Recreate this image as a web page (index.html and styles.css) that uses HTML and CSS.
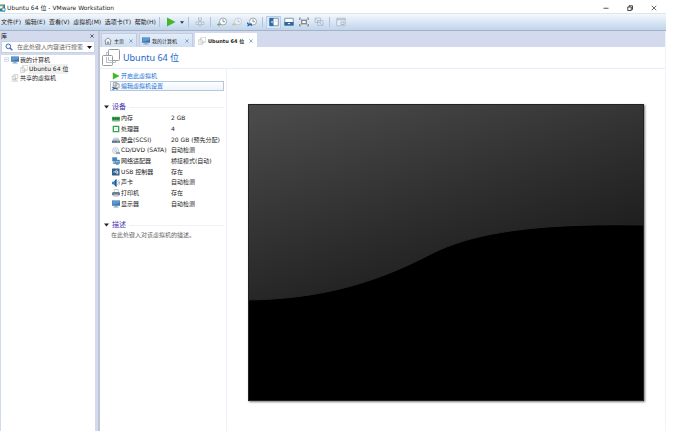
FILE: index.html
```html
<!DOCTYPE html>
<html lang="zh-CN">
<head>
<meta charset="utf-8">
<title>Ubuntu 64 位 - VMware Workstation</title>
<link rel="stylesheet" href="styles.css">
</head>
<body>
<svg class="defs" aria-hidden="true">
  <defs>
    <linearGradient id="grey" x1="0" y1="0" x2="0" y2="1"><stop offset="0" stop-color="#e3eaf0"/><stop offset="1" stop-color="#7d92a4"/></linearGradient>
    <symbol id="vm" viewBox="0 0 18 18"><g fill="#fff" stroke="#989898"><rect x="6.500" y=".5" width="11" height="11" rx="1"/><rect x=".5" y="6.500" width="10" height="10" rx="1"/><path d="M4.500 6.500v-3h2M4.500 8v5.500h9v-2M6.500 8v3.500h4" fill="none" stroke="#b4bfc2"/></g></symbol>
    <symbol id="monitor" viewBox="0 0 18 18"><path d="M0 1h18v12H0z" fill="#3a78b6"/><path d="M1 2h16v4L1 11z" fill="#5c98d2"/><path d="M6 13h6v2h3v2H3v-2h3z" fill="#8fa3b5"/></symbol>
    <symbol id="play" viewBox="0 0 10 10"><path d="M1 0.500L9.500 5L1 9.500z" fill="#44b432"/></symbol>
    <symbol id="clock" viewBox="0 0 20 20"><circle cx="12" cy="9" r="7" fill="#fbfdff" stroke="#8b949c" stroke-width="1.600"/><path d="M12 4.500V9.500H16" fill="none" stroke="#6e7880" stroke-width="1.500"/></symbol>
    <symbol id="cross" viewBox="0 0 10 10"><path d="M1 1l8 8M9 1L1 9" fill="none" stroke="currentColor" stroke-width="2"/></symbol>
    <symbol id="down" viewBox="0 0 10 6"><path d="M0 0h10L5 6z" fill="currentColor"/></symbol>
  </defs>
</svg>
<div class="window">
  <header class="titlebar">
    <svg class="logo" viewBox="0 0 12 16"><path d="M0 1h10v14H0z" fill="#1687b8"/><path d="M0 3h7v7H0z" fill="#f3b33c"/><path d="M0 5h5v3H0z" fill="#fff"/><path d="M4 8h6v6H4z" fill="#fff" stroke="#0c79a9" stroke-width="1.500"/></svg>
    <h1 class="caption">Ubuntu 64 位 - VMware Workstation</h1>
    <div class="controls">
      <button aria-label="最小化"><svg viewBox="0 0 12 12"><path d="M1 6.500h10" stroke="#444" stroke-width="1.800"/></svg></button>
      <button aria-label="还原"><svg viewBox="0 0 12 12"><path d="M4 4V1.500h7V9H9M1.500 4h7v7h-7z" fill="none" stroke="#333" stroke-width="1.800"/></svg></button>
      <button aria-label="关闭"><svg viewBox="0 0 12 12"><path d="M1.500 1.500l9 9M10.500 1.500l-9 9" stroke="#444" stroke-width="1.600"/></svg></button>
    </div>
  </header>

  <div class="menubar">
    <nav class="menus">
      <button>文件(F)</button><button>编辑(E)</button><button>查看(V)</button><button>虚拟机(M)</button><button>选项卡(T)</button><button>帮助(H)</button>
    </nav>
    <div class="tools">
      <span class="sep"></span>
      <button aria-label="开启"><svg class="icon"><use href="#play"/></svg></button>
      <button class="drop" aria-label="电源选项"><svg><use href="#down"/></svg></button>
      <span class="sep"></span>
      <button aria-label="发送按键"><svg class="icon" viewBox="0 0 20 20"><g fill="#e4ebf3" stroke="#abb8c6" stroke-width="1.500"><rect x="7" y="2" width="6" height="5"/><path d="M10 7v4M2 10h16v5H2zM7 10v5M13 10v5M8 15v3h4v-3"/></g></svg></button>
      <span class="sep"></span>
      <button aria-label="拍摄快照"><svg class="icon" viewBox="0 0 20 20"><use href="#clock"/><path d="M0 15h8M4 11v8" stroke="#6ea77b" stroke-width="2"/></svg></button>
      <button aria-label="恢复快照"><svg class="icon" viewBox="0 0 20 20"><g opacity=".4"><use href="#clock"/></g><path d="M9 15H1M4 12l-3 3 3 3" fill="none" stroke="#e3b78a" stroke-width="2"/></svg></button>
      <button aria-label="管理快照"><svg class="icon" viewBox="0 0 20 20"><use href="#clock"/><path d="M1 11c0 4 3 3 5 3h4M1 18l5-3 4 2" fill="none" stroke="#2765a4" stroke-width="2.500"/></svg></button>
      <span class="sep"></span>
      <button class="on" aria-label="显示库"><svg class="icon" viewBox="0 0 20 20"><path d="M1.500 2.500h17v15h-17z" fill="#fff" stroke="#6a7f95" stroke-width="1.600"/><path d="M1 2h8v16H1z" fill="#2e69a8"/><path d="M7 7l-3 3 3 3z" fill="#fff"/><path d="M12 6h4M12 9h4" stroke="#c3ccd5"/></svg></button>
      <button aria-label="显示缩略图"><svg class="icon" viewBox="0 0 20 20"><path d="M1.500 2.500h17v14h-17z" fill="#fff" stroke="#6a7f95" stroke-width="1.600"/><path d="M1 10h18v7H1z" fill="#2c67a5"/><path d="M7 12h6l-3 3z" fill="#fff"/></svg></button>
      <button aria-label="全屏"><svg class="icon" viewBox="0 0 20 20"><path d="M5.500 6.500h9v7h-9z" fill="#fff" stroke="#555" stroke-width="1.800"/><path d="M1 6V2h3M16 2h3v4M19 14v4h-3M4 18H1v-4M2 3l3 3M18 3l-3 3M2 17l3-3M18 17l-3-3" fill="none" stroke="#777" stroke-width="1.400"/></svg></button>
      <button aria-label="Unity"><svg class="icon" viewBox="0 0 20 20"><path d="M2 2h11v9H2zM7 7h11v10H7zM2 2l15 15" fill="none" stroke="#b0bac6" stroke-width="1.600"/></svg></button>
      <span class="sep"></span>
      <button aria-label="控制台视图"><svg class="icon" viewBox="0 0 20 20"><path d="M1.500 2.500h17v15h-17z" fill="#e7eef6" stroke="#acb9c8" stroke-width="1.800"/><path d="M2 5.500h16M10 10h6v5h-6z" fill="none" stroke="#acb9c8" stroke-width="2"/></svg></button>
    </div>
  </div>

  <div class="body">
    <aside class="library">
      <div class="library-head"><h2>库</h2><button aria-label="关闭库"><svg><use href="#cross"/></svg></button></div>
      <div class="search">
        <svg class="lens" viewBox="0 0 12 12"><circle cx="5" cy="5" r="3.500" fill="#eef5fd" stroke="#3c6fae" stroke-width="1.500"/><path d="M7.500 7.500L11 11" stroke="#3c6fae" stroke-width="2"/></svg>
        <input type="text" aria-label="搜索" placeholder="在此处键入内容进行搜索">
        <button aria-label="搜索选项"><svg><use href="#down"/></svg></button>
      </div>
      <ul class="tree">
        <li class="node"><svg class="toggle" viewBox="0 0 10 10"><path d="M1 1h8v8H1z" fill="#fff" stroke="#b9c2cc"/><path d="M3 5h4" stroke="#6c7c90"/></svg><svg class="tree-icon"><use href="#monitor"/></svg><span>我的计算机</span></li>
        <li class="node child"><svg class="tree-icon"><use href="#vm"/></svg><span class="picked">Ubuntu 64 位</span></li>
        <li class="node shared"><svg class="tree-icon" viewBox="0 0 18 18"><g fill="#fff" stroke="#9aa0a6"><path d="M6.500 1.500h9v9h-9zM2.500 4.500h8v8h-8z"/><path d="M6.500 12.500v3M1 16h15M11 11v5"/></g></svg><span>共享的虚拟机</span></li>
      </ul>
    </aside>

    <main class="main">
      <div class="tabs">
        <div class="tab home"><svg class="tab-icon" viewBox="0 0 18 18"><path d="M1 9l8-7 8 7M3.500 8v8.500h4V11h3v5.500h4V8" fill="#fff" stroke="#5d646b" stroke-width="1.500"/></svg><button class="name">主页</button><button class="close" aria-label="关闭主页"><svg><use href="#cross"/></svg></button></div>
        <div class="tab computer"><svg class="tab-icon"><use href="#monitor"/></svg><button class="name">我的计算机</button><button class="close" aria-label="关闭我的计算机"><svg><use href="#cross"/></svg></button></div>
        <div class="tab active"><svg class="tab-icon"><use href="#vm"/></svg><button class="name">Ubuntu 64 位</button><button class="close" aria-label="关闭 Ubuntu"><svg><use href="#cross"/></svg></button></div>
      </div>
      <div class="heading"><svg class="heading-icon"><use href="#vm"/></svg><h2>Ubuntu 64 位</h2></div>
      <div class="content">
        <section class="details">
          <div class="actions">
            <a href="#start"><svg class="row-icon"><use href="#play"/></svg>开启此虚拟机</a>
            <a class="focused" href="#settings"><svg class="row-icon" viewBox="0 0 18 18"><path d="M3 1h8v8H3zM7 4h9v9H7z" fill="#f4f6f8" stroke="#7d858d" stroke-width="1.500"/><path d="M1 11c2 3 4 1 6 3l6 2M1 17l6-3" fill="none" stroke="#35618e" stroke-width="2.500"/></svg>编辑虚拟机设置</a>
          </div>
          <h3 class="group"><svg><use href="#down"/></svg><span>设备</span></h3>
          <table class="devices">
            <tr><th scope="row"><svg class="row-icon" viewBox="0 0 18 18"><path d="M0 4h18v9H0z" fill="#3fa356"/><path d="M2 6h3v4H2zM7 6h3v4H7zM12 6h3v4h-3z" fill="#1d5c33"/><path d="M1 13h16v2H1z" fill="#a9c3a4"/></svg>内存</th><td>2 GB</td></tr>
            <tr><th scope="row"><svg class="row-icon" viewBox="0 0 18 18"><path d="M3 3h12v12H3z" fill="#fff" stroke="#33a355" stroke-width="3"/><path d="M7 7h4v4H7z" fill="#e2f0e4"/></svg>处理器</th><td>4</td></tr>
            <tr><th scope="row"><svg class="row-icon" viewBox="0 0 18 18"><path d="M4 3h10l4 8v4H0v-4z" fill="url(#grey)"/><path d="M0 11h18v4H0z" fill="#5f7487"/><path d="M12 13h3" stroke="#b4ddf2" stroke-width="1.500"/></svg>硬盘(SCSI)</th><td>20 GB (预先分配)</td></tr>
            <tr><th scope="row"><svg class="row-icon" viewBox="0 0 18 18"><circle cx="8" cy="8" r="7" fill="#e9eef2" stroke="#9aa8b4"/><circle cx="8" cy="8" r="2" fill="#fff" stroke="#899aa8"/><path d="M9 11h9v5H9z" fill="#8fa9c1"/></svg>CD/DVD (SATA)</th><td>自动检测</td></tr>
            <tr><th scope="row"><svg class="row-icon" viewBox="0 0 18 18"><path d="M1 1h10v8H1zM6 7h11v8H6z" fill="#3b86c9" stroke="#5f7d98"/><path d="M8 9h7v3H8z" fill="#8fcaf0"/><path d="M3 10v5h3M9 17h6" fill="none" stroke="#477493" stroke-width="1.500"/></svg>网络适配器</th><td>桥接模式(自动)</td></tr>
            <tr><th scope="row"><svg class="row-icon" viewBox="0 0 18 18"><rect x="0" y="1" width="17" height="16" rx="1" fill="#2f618f"/><path d="M3 9h11M6 9l3-4h3M8 9l3 4h3M11 7l3 2-3 2" fill="none" stroke="#fff" stroke-width="1.500"/></svg>USB 控制器</th><td>存在</td></tr>
            <tr><th scope="row"><svg class="row-icon" viewBox="0 0 18 18"><path d="M0 6h3l7-6v18l-7-6H0z" fill="#3c80ba"/><path d="M7 3l3-3v18l-3-3z" fill="#1f558a"/><path d="M12 5c3 2 3 6 0 8M14 3c4 3 4 9 0 12" fill="none" stroke="#6c9abc" stroke-width="1.500"/></svg>声卡</th><td>自动检测</td></tr>
            <tr><th scope="row"><svg class="row-icon" viewBox="0 0 18 18"><path d="M5 1h9v7H5z" fill="#fff" stroke="#8291a0"/><path d="M2 7h14l2 2v5H0V9z" fill="#6c8093"/><path d="M4 12h10v4H4z" fill="#dce7f1" stroke="#60738a"/></svg>打印机</th><td>存在</td></tr>
            <tr><th scope="row"><svg class="row-icon"><use href="#monitor"/></svg>显示器</th><td>自动检测</td></tr>
          </table>
          <h3 class="group"><svg><use href="#down"/></svg><span>描述</span></h3>
          <p class="note">在此处键入对该虚拟机的描述。</p>
        </section>
        <section class="preview">
          <svg class="screen" viewBox="0 0 396 297" role="img" aria-label="虚拟机屏幕">
            <defs><linearGradient id="sheen" gradientUnits="userSpaceOnUse" x1="5" y1="12" x2="72" y2="232"><stop offset="0" stop-color="#4a4a4a"/><stop offset="1" stop-color="#1c1c1c"/></linearGradient></defs>
            <path d="M0 0h396v297H0z" fill="#000"/>
            <path d="M0 0H396V121C290 119 225 128 181 151C125 180 70 195 0 196z" fill="url(#sheen)"/>
            <path d="M396 121C290 119 225 128 181 151C125 180 70 195 0 196" fill="none" stroke="#262626"/>
            <path d="M.5.500h395v296H.5z" fill="none" stroke="#1f2322"/>
          </svg>
        </section>
      </div>
    </main>
  </div>
</div>
</body>
</html>
```

FILE: styles.css
```css
* { box-sizing: border-box; }
body, h1, h2, h3, p, ul { margin: 0; padding: 0; }
body {
  background: #fff;
  color: #1c1c1c;
  font: 6px/10px "DejaVu Sans", "Noto Sans CJK SC", sans-serif;
}
h1, h2, h3, th { font-size: inherit; font-weight: normal; }
button, input { font: inherit; color: inherit; border: 0; padding: 0; margin: 0; background: none; }
svg { display: block; flex: none; }
.defs { position: absolute; width: 0; height: 0; }

.window { display: flex; flex-direction: column; min-height: 100vh; margin-right: 12px; }

.titlebar { display: flex; align-items: center; height: 13px; padding-top: 2px; }
.logo { width: 6px; height: 8px; margin-right: 1px; }
.caption { flex: 1; white-space: nowrap; }
.controls { display: flex; gap: 8px; padding-right: 4px; }
.controls button { display: grid; place-items: center; width: 16px; height: 10px; }
.controls svg { width: 6px; height: 6px; }

.menubar {
  display: flex;
  align-items: center;
  height: 18px;
  border-top: 1px solid #dde5ee;
  border-bottom: 1px solid #a5b2c5;
  background: linear-gradient(#f4f8fd, #c0d5ec);
}
.menus { display: flex; justify-content: space-between; width: 156px; padding-left: 1px; white-space: nowrap; }
.tools { display: flex; align-items: center; }
.tools button { display: grid; place-items: center; width: 15px; height: 13px; }
.tools .drop { width: 7px; color: #1d2c72; }
.drop svg { width: 4px; height: 3px; }
.tools .on { border: 1px solid #b5cfe9; background: #d9e9f9; }
.icon { width: 10px; height: 10px; }
.sep { width: 1px; height: 10px; margin: 0 3px; background: #b2c2d5; }

.body { display: flex; flex: 1; }
.library {
  display: flex;
  flex-direction: column;
  width: 100px;
  flex: none;
  padding-right: 3px;
  border-right: 2px solid #bfc5d5;
  background: #d3daee;
}
.library-head { display: flex; justify-content: space-between; align-items: center; height: 10px; padding: 0 1px; }
.library-head svg { width: 4px; height: 4px; }
.library-head button { color: #444; }
.search { display: flex; align-items: center; height: 12px; margin-left: 1px; border: 1px solid #c9d2e2; background: #fff; }
.lens { width: 8px; height: 8px; margin: 0 4px 0 3px; }
.search input { flex: 1; min-width: 0; height: 10px; outline: 0; }
.search input::placeholder { color: #666; opacity: 1; }
.search button { padding: 0 2px; color: #111; }
.search button svg { width: 5px; height: 3px; }
.tree { flex: 1; margin: 2px 0 0 1px; padding-left: 3px; list-style: none; background: #fff; }
.node { display: flex; align-items: center; height: 9px; white-space: nowrap; }
.toggle { width: 5px; height: 5px; margin-right: 2px; }
.tree-icon { width: 8px; height: 8px; margin-right: 1px; }
.child { padding-left: 16px; }
.shared { padding-left: 7px; }
.picked { background: #f0f0f0; }

.main { display: flex; flex: 1; flex-direction: column; min-width: 0; border-right: 1px solid #f0f3f9; }
.tabs { display: flex; align-items: flex-end; gap: 2px; height: 16px; padding-left: 1px; background: #d3daee; }
.tab {
  display: flex;
  align-items: center;
  height: 14px;
  padding: 0 3px 0 2px;
  border: 1px solid #c0cce0;
  border-bottom: 0;
  background: linear-gradient(#e3edf9, #cfdef1);
  font-size: 5px;
}
.home { width: 36px; }
.computer { width: 54px; }
.active { width: 62px; border-color: #fff; background: #fff; font-weight: bold; }
.tab-icon { width: 8px; height: 8px; margin-right: 2px; }
.name { white-space: nowrap; }
.close { margin-left: auto; color: #6796bd; }
.close svg { width: 4px; height: 4px; }
.heading { display: flex; align-items: center; gap: 3px; height: 22px; padding: 0 2px; border-bottom: 1px solid #e6eefa; }
.heading h2 { color: #1a66cc; font: 9px/12px "Noto Sans", "Noto Sans CJK SC", sans-serif; }
.heading-icon { width: 18px; height: 18px; }

.content { display: flex; flex: 1; }
.details { width: 127px; flex: none; padding: 2px 2px 0 4px; border-right: 1px solid #edf1fa; }
.actions { padding-left: 6px; margin-bottom: 11px; }
.actions a { display: flex; align-items: center; height: 10px; padding-left: 1px; border: 1px solid transparent; color: #1a72d8; text-decoration: none; }
.actions .focused { border-color: #b7c8d8; background: linear-gradient(#fff, #edf4fb); }
.row-icon { width: 8px; height: 8px; margin-right: 1px; }
.group { display: flex; align-items: center; gap: 3px; height: 10px; color: #4a35b5; }
.group svg { width: 5px; height: 4px; color: #222; }
.group span { font-size: 7px; }
.group::after { content: ""; flex: 1; height: 1px; background: #eef1f7; }
.devices { width: 100%; height: 96px; margin: 1px 0 11px; border-collapse: collapse; table-layout: fixed; line-height: 10px; }
.devices th, .devices td { padding: 0; text-align: left; white-space: nowrap; vertical-align: middle; }
.devices th { width: 67px; padding-left: 8px; }
.devices .row-icon { display: inline-block; vertical-align: middle; }
.note { padding-left: 7px; color: #666; }

.preview { flex: 1; min-width: 0; padding: 35px 21px 30px; }
.screen { width: 100%; height: auto; box-shadow: 1px 1px 2px #777; }
```
